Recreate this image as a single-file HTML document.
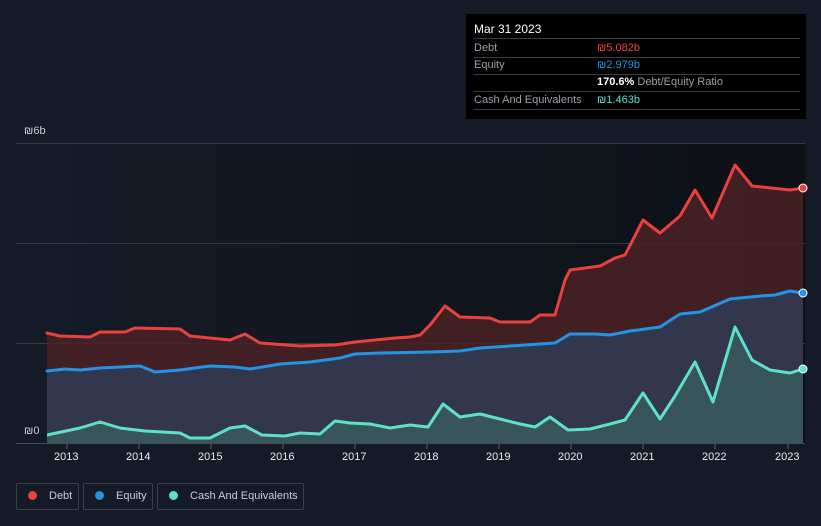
<!DOCTYPE html>
<html style="overflow:hidden;width:821px;height:526px"><head><meta charset="utf-8"><style>
body{margin:0;width:821px;height:526px;background:#151b26;font-family:"Liberation Sans",sans-serif;overflow:hidden;position:relative}
.tip{position:absolute;left:466px;top:14px;width:340px;height:105px;background:#000;color:#fff;font-size:11px}
.tip .r{position:absolute;left:8px;right:6px;height:17px;border-bottom:1px solid #3a3d42;line-height:17px;white-space:nowrap}
.g{color:#9aa0a8}
.lg{position:absolute;top:483px;height:27px;border:1px solid #3a404a;border-radius:2px;color:#c8cdd3;font-size:11px;line-height:25px;box-sizing:border-box;white-space:nowrap;overflow:hidden}
.lg i{display:inline-block;width:9px;height:9px;border-radius:50%;margin:0 12px 0 11px;vertical-align:-1px}
.ax{position:absolute;color:#e8eaed;font-size:11px;white-space:nowrap}
</style></head><body>
<svg width="821" height="526" style="position:absolute;left:0;top:0">
<defs>
<linearGradient id="bg" x1="0" x2="1"><stop offset="0" stop-color="#151b26"/><stop offset="1" stop-color="#0d1016"/></linearGradient>
</defs>
<rect x="47" y="144" width="758" height="299" fill="url(#bg)"/>
<g stroke="#353a44" stroke-width="1">
<line x1="16" y1="143.5" x2="805" y2="143.5"/><line x1="16" y1="243.5" x2="805" y2="243.5"/><line x1="16" y1="343.5" x2="805" y2="343.5"/><line x1="16" y1="443.5" x2="805" y2="443.5" stroke="#444a55"/>
</g>
<path fill="#4a2226" fill-opacity="0.85" d="M47,333 L60,336 90,337 100,332 125,332 135,328 180,329 190,336 230,340 245,334 260,343 300,346 335,345 355,342 395,338 410,337 420,335 430,325 445,306 460,317 490,318 500,322 530,322 540,315 555,315 565,280 570,270 600,266 615,258 625,255 643,220 660,233 680,216 695,190 712,218 735,165 752,186 790,190 803,188 L803,443 L47,443Z"/>
<path fill="#323a52" fill-opacity="0.9" d="M47,371 L65,369 80,370 100,368 140,366 155,372 180,370 210,366 235,367 250,369 280,364 310,362 340,358 355,354 380,353 430,352 460,351 480,348 510,346 555,343 570,334 595,334 610,335 630,331 660,327 680,314 700,312 730,299 760,296 775,295 790,291 803,293 L803,443 L47,443Z"/>
<path fill="#3a5a5e" fill-opacity="0.85" d="M47,435 L80,428 100,422 120,428 145,431 180,433 190,438 210,438 230,428 245,426 262,435 285,436 300,433 320,434 335,421 350,423 370,424 390,428 410,425 428,427 443,404 460,417 480,414 500,419 520,424 535,427 550,417 568,430 590,429 610,424 625,420 643,393 660,419 675,396 695,362 713,402 735,327 752,360 770,370 790,373 803,369 L803,443 L47,443Z"/>
<g fill="none" stroke-width="3" stroke-linejoin="round" stroke-linecap="round">
<polyline stroke="#e8423f" points="47,333 60,336 90,337 100,332 125,332 135,328 180,329 190,336 230,340 245,334 260,343 300,346 335,345 355,342 395,338 410,337 420,335 430,325 445,306 460,317 490,318 500,322 530,322 540,315 555,315 565,280 570,270 600,266 615,258 625,255 643,220 660,233 680,216 695,190 712,218 735,165 752,186 790,190 803,188"/>
<polyline stroke="#2394e4" points="47,371 65,369 80,370 100,368 140,366 155,372 180,370 210,366 235,367 250,369 280,364 310,362 340,358 355,354 380,353 430,352 460,351 480,348 510,346 555,343 570,334 595,334 610,335 630,331 660,327 680,314 700,312 730,299 760,296 775,295 790,291 803,293"/>
<polyline stroke="#5fe0cc" points="47,435 80,428 100,422 120,428 145,431 180,433 190,438 210,438 230,428 245,426 262,435 285,436 300,433 320,434 335,421 350,423 370,424 390,428 410,425 428,427 443,404 460,417 480,414 500,419 520,424 535,427 550,417 568,430 590,429 610,424 625,420 643,393 660,419 675,396 695,362 713,402 735,327 752,360 770,370 790,373 803,369"/>
</g>
<g stroke="#fff" stroke-width="1">
<circle cx="803" cy="188" r="4" fill="#e8423f"/><circle cx="803" cy="293" r="4" fill="#2394e4"/><circle cx="803" cy="369" r="4" fill="#5fe0cc"/>
</g>
<g stroke="#5a606a"><line x1="67" y1="444" x2="67" y2="449"/><line x1="139" y1="444" x2="139" y2="449"/><line x1="211" y1="444" x2="211" y2="449"/><line x1="283" y1="444" x2="283" y2="449"/><line x1="355" y1="444" x2="355" y2="449"/><line x1="427" y1="444" x2="427" y2="449"/><line x1="499" y1="444" x2="499" y2="449"/><line x1="571" y1="444" x2="571" y2="449"/><line x1="643" y1="444" x2="643" y2="449"/><line x1="715" y1="444" x2="715" y2="449"/><line x1="788" y1="444" x2="788" y2="449"/></g>
<rect x="17" y="424" width="30" height="18" fill="#151b26"/>
</svg>
<div class="ax" style="left:24px;top:125px;color:#c8cdd3">₪6b</div>
<div class="ax" style="left:24px;top:425px;color:#c8cdd3">₪0</div>
<div class="ax" style="left:54px;top:451px">2013</div>
<div class="ax" style="left:126px;top:451px">2014</div>
<div class="ax" style="left:198px;top:451px">2015</div>
<div class="ax" style="left:270px;top:451px">2016</div>
<div class="ax" style="left:342px;top:451px">2017</div>
<div class="ax" style="left:414px;top:451px">2018</div>
<div class="ax" style="left:486px;top:451px">2019</div>
<div class="ax" style="left:558px;top:451px">2020</div>
<div class="ax" style="left:630px;top:451px">2021</div>
<div class="ax" style="left:702px;top:451px">2022</div>
<div class="ax" style="left:775px;top:451px">2023</div>
<div class="tip">
<div class="r" style="top:7px;font-size:12px">Mar 31 2023</div>
<div class="r g" style="top:26px">Debt<span style="position:absolute;left:123px;color:#e8423f">₪5.082b</span></div>
<div class="r g" style="top:43px">Equity<span style="position:absolute;left:123px;color:#2394e4">₪2.979b</span></div>
<div class="r g" style="top:60px;border:none"><span style="position:absolute;left:123px"><b style="color:#fff">170.6%</b> Debt/Equity Ratio</span></div>
<div class="r g" style="top:77px;border-top:1px solid #3a3d42">Cash And Equivalents<span style="position:absolute;left:123px;color:#5fe0cc">₪1.463b</span></div>
</div>
<div class="lg" style="left:16px;width:63px"><i style="background:#e8423f"></i>Debt</div>
<div class="lg" style="left:83px;width:70px"><i style="background:#2394e4"></i>Equity</div>
<div class="lg" style="left:157px;width:147px"><i style="background:#5fe0cc"></i>Cash And Equivalents</div>
</body></html>
